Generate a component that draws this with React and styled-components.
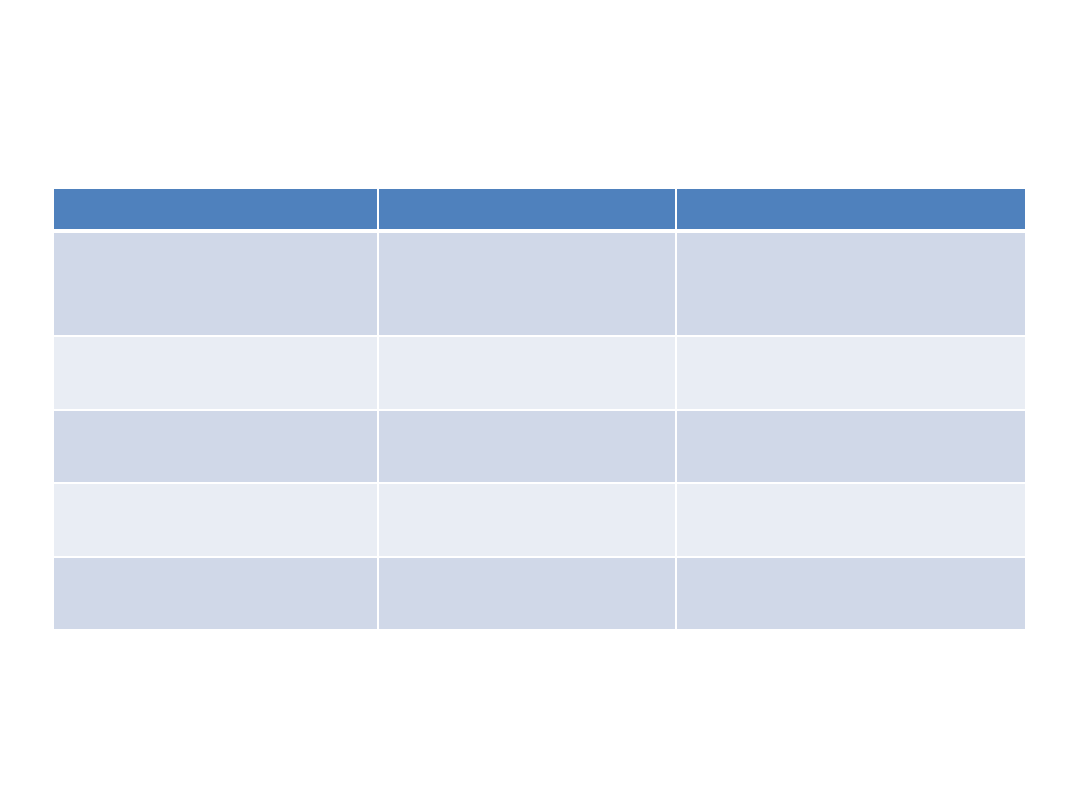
import React from "react";
import styled, { createGlobalStyle } from "styled-components";

const GlobalStyle = createGlobalStyle`
  html, body {
    margin: 0;
    padding: 0;
    background: #ffffff;
    font-family: "Liberation Sans", Arial, sans-serif;
  }
`;

const Page = styled.div`
  width: 1080px;
  height: 810px;
  background: #ffffff;
  padding: 189px 0 0 54px;
  box-sizing: border-box;
`;

const Table = styled.div`
  display: flex;
  flex-direction: column;
  gap: 2px;
  width: 971px;
`;

const Row = styled.div`
  display: grid;
  grid-template-columns: 323px 296px 348px;
  column-gap: 2px;
  height: ${(p) => p.$height}px;
  margin-bottom: ${(p) => (p.$header ? 2 : 0)}px;
`;

const tones = {
  header: "#4f81bd",
  dark: "#d0d8e8",
  light: "#e9edf4",
};

const Cell = styled.div`
  background: ${(p) => tones[p.$tone]};
`;

const rows = [
  { tone: "header", height: 40 },
  { tone: "dark", height: 102 },
  { tone: "light", height: 72 },
  { tone: "dark", height: 71 },
  { tone: "light", height: 72 },
  { tone: "dark", height: 71 },
];

export default function App() {
  return (
    <>
      <GlobalStyle />
      <Page>
        <Table>
          {rows.map((r, i) => (
            <Row key={i} $height={r.height} $header={r.tone === "header"}>
              <Cell $tone={r.tone} />
              <Cell $tone={r.tone} />
              <Cell $tone={r.tone} />
            </Row>
          ))}
        </Table>
      </Page>
    </>
  );
}
